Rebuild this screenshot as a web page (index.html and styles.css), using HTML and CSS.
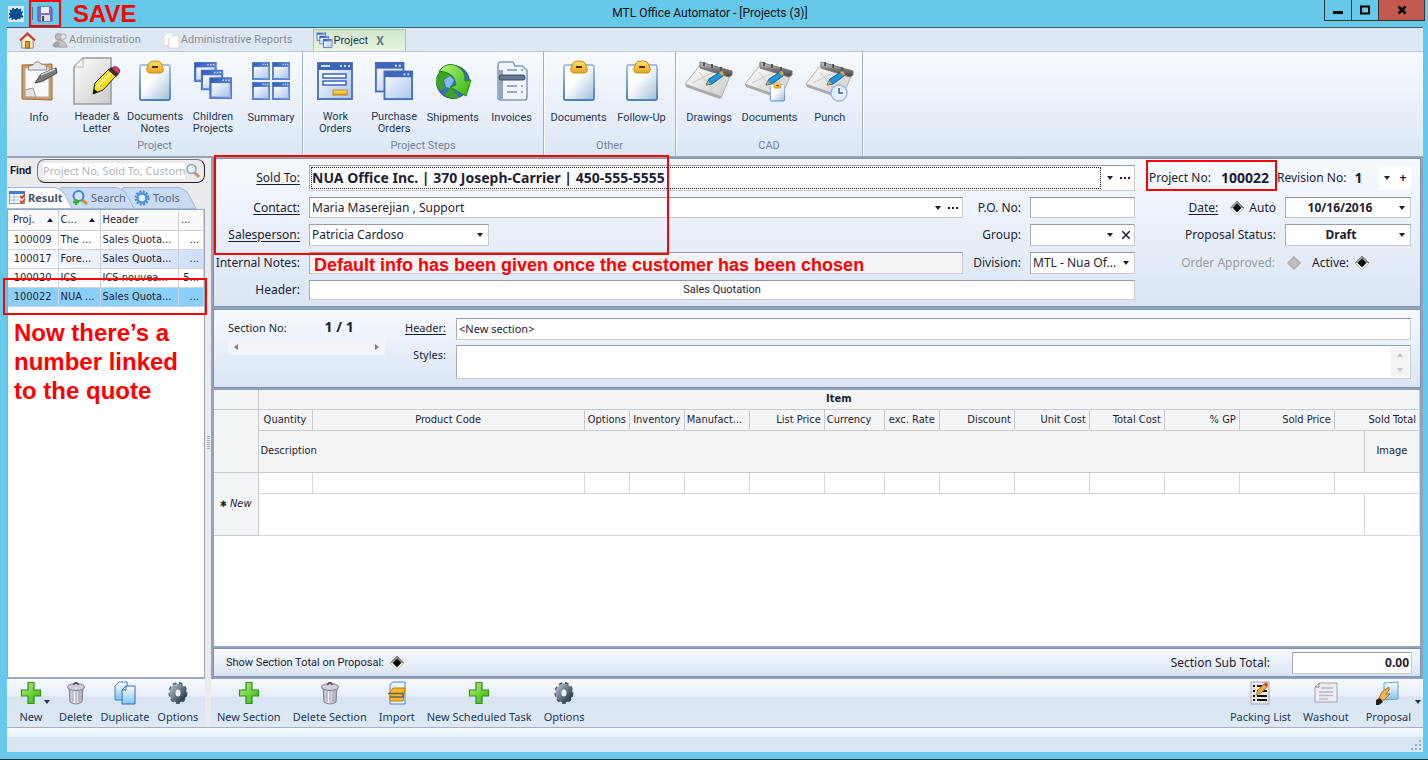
FILE: index.html
```html
<!DOCTYPE html>
<html lang="en">
<head>
<meta charset="utf-8">
<title>MTL Office Automator - [Projects (3)]</title>
<link rel="stylesheet" href="styles.css">
</head>
<body>
<svg class="sprite" width="0" height="0" aria-hidden="true">
  <defs>
    <linearGradient id="g-blue" x1="0" y1="0" x2="1" y2="1"><stop offset="0" stop-color="#2b56b5"/><stop offset="1" stop-color="#7fa6e6"/></linearGradient>
    <linearGradient id="g-pane" x1="0" y1="0" x2="1" y2="1"><stop offset="0" stop-color="#fff"/><stop offset="1" stop-color="#a9c4ef"/></linearGradient>
    <linearGradient id="g-page" x1="0" y1="0" x2="1" y2="1"><stop offset="0" stop-color="#fff"/><stop offset="1" stop-color="#c9c9c9"/></linearGradient>
    <linearGradient id="g-clip" x1="0" y1="0" x2="1" y2="1"><stop offset="0.4" stop-color="#fff"/><stop offset="1" stop-color="#9dbbd8"/></linearGradient>
    <linearGradient id="g-clipb" x1="0" y1="0" x2="0" y2="1"><stop offset="0" stop-color="#a9c0dc"/><stop offset="1" stop-color="#4a86b4"/></linearGradient>
    <linearGradient id="g-gold" x1="0" y1="0" x2="0" y2="1"><stop offset="0" stop-color="#ffe274"/><stop offset="1" stop-color="#e9a51d"/></linearGradient>
    <linearGradient id="g-green" x1="0" y1="0" x2="1" y2="1"><stop offset="0" stop-color="#b4f27c"/><stop offset="1" stop-color="#2fb50f"/></linearGradient>
    <linearGradient id="g-metal" x1="0" y1="0" x2="0" y2="1"><stop offset="0" stop-color="#d8d8d8"/><stop offset="0.5" stop-color="#777"/><stop offset="1" stop-color="#444"/></linearGradient>
    <linearGradient id="g-bin" x1="0" y1="0" x2="1" y2="0"><stop offset="0" stop-color="#a9a9b6"/><stop offset="0.4" stop-color="#f6f6fb"/><stop offset="1" stop-color="#a2a2b0"/></linearGradient>
    <linearGradient id="g-sky" x1="0" y1="0" x2="0" y2="1"><stop offset="0" stop-color="#fff"/><stop offset="1" stop-color="#7fc4ef"/></linearGradient>
    <linearGradient id="g-gear" x1="0" y1="0" x2="1" y2="1"><stop offset="0" stop-color="#a3b2c0"/><stop offset="1" stop-color="#2f3c49"/></linearGradient>
  </defs>
  <symbol id="win" viewBox="0 0 24 22" preserveAspectRatio="none">
    <rect x="0.5" y="0.5" width="23" height="21" fill="url(#g-blue)" stroke="#4d74c4"/>
    <rect x="2.500" y="6" width="19" height="13.500" fill="url(#g-pane)"/>
    <path d="M14 3h1.500M17 3h1.500M20 3h1.500" stroke="#cfe0ff" stroke-width="1.500"/>
  </symbol>
  <symbol id="clip" viewBox="0 0 36 42">
    <rect x="3" y="5" width="30" height="35" rx="2" fill="url(#g-clip)" stroke="url(#g-clipb)" stroke-width="2"/>
    <path d="M12 3Q13 1 18 1T24 3L26 8Q27 13 23 13H13Q9 13 10 8Z" fill="url(#g-gold)" stroke="#c98c18"/>
    <rect x="15" y="6" width="6" height="2" fill="#4c3000"/>
  </symbol>
  <symbol id="info" viewBox="0 0 40 42">
    <path d="M3 5L33 4 33 40 3 39Z" fill="#d49a5c" stroke="#9c6a35"/>
    <path d="M6 8L30 7 30 37 12 37 6 30Z" fill="#fafafa" stroke="#aaa"/>
    <path d="M6 30L14 28 17 37 6 37Z" fill="#e4e4e4" stroke="#999"/>
    <path d="M10 6L14 5Q18 -1 22 4L27 5 28 10H9Z" fill="#e7e7e7" stroke="#8b8b8b"/>
    <path d="M16 23L22 14 37 8 38 13 24 21Z" fill="#7a7a7a" stroke="#444"/>
    <path d="M22 15L36 9" stroke="#cfcfcf" stroke-width="1.500"/>
  </symbol>
  <symbol id="letter" viewBox="0 0 48 48">
    <path d="M10 1H38V47H1V10Z" fill="url(#g-page)" stroke="#9a9a9a" stroke-width="1.500"/>
    <path d="M10 1V10H1Z" fill="#fff" stroke="#aaa"/>
    <path d="M20 37L22 26 36 12 43 19 30 33Z" fill="#f6dc25" stroke="#222"/>
    <path d="M24 30L38 16" stroke="#fff799" stroke-width="2"/>
    <path d="M35 13L38 10 46 17 43 20Z" fill="#333"/>
    <path d="M39 11Q43 8 46 12 48 15 45 17Z" fill="#d83c5a" stroke="#8a2036"/>
    <path d="M20 37L21 32 25 35Z" fill="#111"/>
  </symbol>
  <symbol id="cascade" viewBox="0 0 42 40">
    <use href="#win" x="1" y="0" width="24" height="21"/>
    <use href="#win" x="8" y="8" width="24" height="22"/>
    <use href="#win" x="17" y="16" width="24" height="23"/>
  </symbol>
  <symbol id="tiles" viewBox="0 0 42 40">
    <use href="#win" x="1" y="0" width="19" height="19"/><use href="#win" x="22" y="0" width="19" height="19"/>
    <use href="#win" x="1" y="21" width="19" height="19"/><use href="#win" x="22" y="21" width="19" height="19"/>
  </symbol>
  <symbol id="orders" viewBox="0 0 40 42">
    <rect x="3" y="3" width="34" height="36" fill="url(#g-pane)" stroke="#5279bd" stroke-width="2"/>
    <rect x="3" y="3" width="34" height="7" fill="#3a66b4"/>
    <path d="M6 6h9M25 6h2M29 6h2M33 6h2" stroke="#cfe0ff" stroke-width="2"/>
    <path d="M8 14H31V18H8ZM8 21H31V25H8Z" fill="#fff" stroke="#3c64c4" stroke-width="1.500"/>
    <rect x="18" y="30" width="14" height="5" fill="url(#g-gold)" stroke="#b9861d"/>
  </symbol>
  <symbol id="two" viewBox="0 0 42 42">
    <rect x="2" y="2" width="29" height="30" fill="url(#g-pane)" stroke="#4a70b8" stroke-width="2"/><rect x="2" y="2" width="29" height="6" fill="#3f67b5"/>
    <rect x="11" y="11" width="29" height="29" fill="url(#g-pane)" stroke="#4a70b8" stroke-width="2"/><rect x="11" y="11" width="29" height="6" fill="#3f67b5"/>
    <path d="M22 5h2M26 5h2M31 14h2M35 14h2" stroke="#d6e4ff" stroke-width="2"/>
  </symbol>
  <symbol id="globe" viewBox="0 0 40 42">
    <circle cx="20" cy="22" r="16.500" fill="#356ec2" stroke="#28527c"/>
    <path d="M4 16Q8 7 16 6L17 16 10 20 12 28 7 31Q1 23 4 16ZM18 27L26 38Q18 40 11 35Z" fill="#3ca323"/>
    <path d="M11 20L17 16 21 20 17 28 13 27Z" fill="#8bb8f0"/>
    <path d="M6 11Q14 1 24 6 33 11 32 21L38 20 33 36 17 27 23 25Q22 12 6 11Z" fill="url(#g-green)" stroke="#278a12"/>
  </symbol>
  <symbol id="invoice" viewBox="0 0 34 42">
    <path d="M3 6Q3 2 6 2H18L20 6H27L32 10V38Q32 40 29 40H6Q3 40 3 37Z" fill="#f0f5fc" stroke="#7f99bb" stroke-width="1.500"/>
    <path d="M4 10H8V39H4Z" fill="#8fa5c4"/>
    <rect x="4" y="15" width="26" height="5" rx="2" fill="#66788f" stroke="#3f4d5f"/>
    <path d="M12 10h10M12 26h10M12 32h10M26 26h2M26 32h2M26 10h2" stroke="#7b8fab" stroke-width="1.500"/>
  </symbol>
  <symbol id="board" viewBox="0 0 50 42">
    <path d="M16 5L47 14 37 38 1 24Z" fill="url(#g-page)" stroke="#b5b5b5"/>
    <path d="M1 24L37 36 36 39 2 27Z" fill="#aaa"/>
    <path d="M8 23L30 12M15 12L28 28M26 31L40 18" stroke="#c9c9c9" fill="none"/>
    <path d="M16 2L48 11V15L45 17 16 8Z" fill="url(#g-metal)" stroke="#777"/>
    <path d="M20 2V6M28 4V8M37 7V11" stroke="#555" stroke-width="2"/>
    <path d="M22 25L25 19 36 12 39 16 28 24Z" fill="#2196d6" stroke="#135e91"/>
    <path d="M35 12L38 11 40 14 38 16Z" fill="#e4a345"/><path d="M22 25L24 21 27 24Z" fill="#d8a052"/>
  </symbol>
  <symbol id="board-doc" viewBox="0 0 50 42">
    <use href="#board" width="50" height="42"/><use href="#clip" x="25" y="22" width="17" height="20"/>
  </symbol>
  <symbol id="board-clock" viewBox="0 0 50 42">
    <use href="#board" width="50" height="42"/><circle cx="34" cy="33" r="8" fill="#e5efff" stroke="#9db6dd" stroke-width="1.500"/><path d="M34 28V33H38" fill="none" stroke="#3c5b8f" stroke-width="1.500"/>
  </symbol>
  <symbol id="plus" viewBox="0 0 24 24"><path d="M9 1.500H15V9H21.500V15H15V22.500H9V15H2.500V9H9Z" fill="url(#g-green)" stroke="#2f8f16" stroke-width="1.200"/></symbol>
  <symbol id="bin" viewBox="0 0 24 24"><path d="M5 7H19L18 21Q12 25 6 21Z" fill="url(#g-bin)" stroke="#85858f"/><path d="M9 10V21M12 10V22M15 10V21" stroke="#9c9cab"/><ellipse cx="12" cy="6" rx="8.500" ry="3.500" fill="#cfcfdb" stroke="#80808e"/><path d="M9.500 4Q12 -1 14.500 4" fill="none" stroke="#444" stroke-width="1.500"/></symbol>
  <symbol id="copy" viewBox="0 0 24 24"><path d="M2 5L6 1H14V19H2Z" fill="url(#g-sky)" stroke="#3e80bc"/><path d="M9 9L13 5H22V23H9Z" fill="url(#g-sky)" stroke="#2770b3"/><path d="M13 5V9H9" fill="none" stroke="#2770b3"/></symbol>
  <symbol id="gear" viewBox="0 0 24 24"><ellipse cx="12" cy="12" rx="8" ry="9.500" fill="none" stroke="#4a5967" stroke-width="3" stroke-dasharray="3.500 2.500"/><ellipse cx="12" cy="12" rx="5.500" ry="6.500" fill="none" stroke="url(#g-gear)" stroke-width="6"/></symbol>
  <symbol id="import" viewBox="0 0 24 24"><path d="M8 1H20V23H5V4Z" fill="#e6f3fd" stroke="#4889c1"/><path d="M5 11L8 7H20L18 20H5Z" fill="#f7b729" stroke="#c07c0a"/><path d="M3 12.500H18V16H5" fill="none" stroke="#666" stroke-width="1.500"/></symbol>
  <symbol id="packing" viewBox="0 0 24 24"><path d="M3 1H21V23H3Z" fill="#e8e8e8" stroke="#aaa"/><path d="M5 5h2M5 10h2M5 15h2M5 19h2M9 5h10M9 10h10M9 15h10M9 19h10" stroke="#111" stroke-width="2"/><path d="M8 14L10 9 16 3 19 6 13 12Z" fill="#f2a93c" stroke="#a96312" stroke-width=".7"/><path d="M16 3L18 1 20 4 19 6Z" fill="#d33"/></symbol>
  <symbol id="washout" viewBox="0 0 24 24"><path d="M5 2H23V21H1V6Z" fill="#ececf2" stroke="#a4a4b0"/><path d="M5 2V6H1" fill="none" stroke="#888"/><path d="M7 7h12M5 11h14M5 14.500h14M5 18h9" stroke="#b9b9c9" stroke-width="1.500"/></symbol>
  <symbol id="proposal" viewBox="0 0 24 24"><path d="M8 2L22 1V18L8 19Z" fill="url(#g-sky)" stroke="#5da5c9"/><path d="M2 19L6 11 13 6 13 9 10 13H14L8 19Z" fill="#f7b35a" stroke="#b36d1b"/><path d="M0 19L4 17 7 21 3 24H0Z" fill="#222"/></symbol>
  <symbol id="home" viewBox="0 0 18 18"><path d="M3 8V17H15V8L9 3Z" fill="#f8f0d6" stroke="#9a7d4c"/><path d="M1 9L9 1.500 17 9" fill="none" stroke="#d33a2c" stroke-width="2.200"/><rect x="7" y="10" width="4" height="7" fill="#e69a1c" stroke="#93600f"/></symbol>
  <symbol id="people" viewBox="0 0 18 18"><circle cx="8" cy="5" r="3.500" fill="#bbb" stroke="#9b9b9b"/><circle cx="13" cy="5" r="3" fill="#e4e4e4" stroke="#aaa"/><path d="M4 16Q5 8 9 9 15 8 17 16Z" fill="#c4c4c4" stroke="#a0a0a0"/><path d="M1 14L5 10 9 11 9 16H3Z" fill="#a5a5a5"/></symbol>
  <symbol id="pages" viewBox="0 0 18 18"><path d="M1 5L4 1H11V14H1Z" fill="#fdfdfd" stroke="#ddd"/><path d="M6 7L9 4H17V17H6Z" fill="#fff" stroke="#d5d5d5"/></symbol>
  <symbol id="app" viewBox="0 0 16 16"><rect width="16" height="16" fill="#d5ecf8"/><path d="M2 4L4 5 5 2 7 4 9 2 10 4 13 3 12 6 15 6 13 8 15 11 12 11 12 13 10 12 8 14 6 12 4 14 4 11 1 12 3 9 1 8 3 7Z" fill="#0d4c92" stroke="#0d4c92" stroke-linejoin="round"/></symbol>
  <symbol id="disk" viewBox="0 0 16 16"><path d="M1 1H14L15 3V15H1Z" fill="#7d72c4" stroke="#5a5099"/><rect x="4" y="1" width="8" height="6" fill="#eef"/><rect x="4" y="9" width="9" height="6" fill="#ddd"/><rect x="5" y="10" width="2" height="5" fill="#444"/></symbol>
  <symbol id="lens" viewBox="0 0 16 16"><path d="M9 9L14 14" stroke="#c99261" stroke-width="3"/><circle cx="6.500" cy="6" r="4.500" fill="#e4effa" stroke="#8fa2b8" stroke-width="1.500"/></symbol>
  <symbol id="lens-plus" viewBox="0 0 16 16"><path d="M9 9L15 14" stroke="#d98a2c" stroke-width="3"/><circle cx="6.500" cy="6" r="5" fill="#cfe5fb" stroke="#4784cf" stroke-width="2"/><path d="M4 9V15M1 12H7" stroke="#35b31c" stroke-width="2.500"/></symbol>
  <symbol id="result" viewBox="0 0 16 16"><rect x="0.500" y="1.500" width="15" height="12" fill="#fff" stroke="#7da0cf"/><rect y="1" width="16" height="3" fill="#3f7ccc"/><path d="M1 7h9M1 10h9M5 4v9" stroke="#9db9dd"/><path d="M11 6L13 8 16 4M11 11L13 13 16 9" fill="none" stroke="#e23d1c" stroke-width="2"/></symbol>
  <symbol id="tools" viewBox="0 0 16 16"><circle cx="8" cy="8" r="6.500" fill="none" stroke="#3f87d0" stroke-width="2" stroke-dasharray="2 1.400"/><circle cx="8" cy="8" r="4.500" fill="#eaf4ff" stroke="#4a93dc" stroke-width="2.500"/></symbol>
  <symbol id="down" viewBox="0 0 8 8"><path d="M1 2H7L4 6Z" fill="currentColor"/></symbol>
  <symbol id="up" viewBox="0 0 8 8"><path d="M1 6H7L4 2Z" fill="currentColor"/></symbol>
  <symbol id="left" viewBox="0 0 8 8"><path d="M6 1V7L2 4Z" fill="currentColor"/></symbol>
  <symbol id="right" viewBox="0 0 8 8"><path d="M2 1V7L6 4Z" fill="currentColor"/></symbol>
  <symbol id="dots" viewBox="0 0 12 8"><path d="M0 3h2v2h-2zM4 3h2v2h-2zM8 3h2v2h-2z" fill="currentColor"/></symbol>
  <symbol id="cross" viewBox="0 0 8 8"><path d="M0 0L8 8M8 0L0 8" stroke="currentColor" stroke-width="1.500"/></symbol>
</svg>

<header class="titlebar">
  <svg class="i16"><use href="#app"/></svg>
  <span class="title-sep"></span>
  <button class="save" aria-label="Save"><svg class="i16"><use href="#disk"/></svg></button>
  <strong class="note note-save">SAVE</strong>
  <h1 class="title">MTL Office Automator - [Projects (3)]</h1>
  <div class="winbtns">
    <button aria-label="Minimize"><svg width="12" height="12"><rect x="1" y="7" width="10" height="3"/></svg></button>
    <button aria-label="Maximize"><svg width="12" height="12"><path d="M2 2.500H10V9.500H2Z" fill="none" stroke="#000" stroke-width="2"/></svg></button>
    <button class="close" aria-label="Close"><svg width="12" height="12"><path d="M2.500 2.500L9.500 9.500M9.500 2.500L2.500 9.500" stroke="#000" stroke-width="2.500"/></svg></button>
  </div>
</header>

<main class="window">
  <nav class="doctabs">
    <a href="#" class="home" aria-label="Home"><svg class="i18"><use href="#home"/></svg></a>
    <a href="#" class="tab-admin"><svg class="i18"><use href="#people"/></svg>Administration</a>
    <a href="#" class="tab-reports"><svg class="i18"><use href="#pages"/></svg>Administrative Reports</a>
    <a href="#" class="active"><svg class="i18"><use href="#cascade"/></svg>Project <b>X</b></a>
  </nav>

  <div class="ribbon">
    <section class="rgroup g-project"><div class="rbtns">
      <button><svg><use href="#info"/></svg><span>Info</span></button>
      <button class="two big"><svg><use href="#letter"/></svg><span>Header &amp; Letter</span></button>
      <button class="two"><svg><use href="#clip"/></svg><span>Documents Notes</span></button>
      <button class="two"><svg><use href="#cascade"/></svg><span>Children Projects</span></button>
      <button><svg><use href="#tiles"/></svg><span>Summary</span></button>
    </div><h2>Project</h2></section>
    <section class="rgroup g-steps"><div class="rbtns">
      <button class="two"><svg><use href="#orders"/></svg><span>Work<br>Orders</span></button>
      <button class="two"><svg><use href="#two"/></svg><span>Purchase Orders</span></button>
      <button><svg><use href="#globe"/></svg><span>Shipments</span></button>
      <button><svg><use href="#invoice"/></svg><span>Invoices</span></button>
    </div><h2>Project Steps</h2></section>
    <section class="rgroup g-other"><div class="rbtns">
      <button><svg><use href="#clip"/></svg><span>Documents</span></button>
      <button><svg><use href="#clip"/></svg><span>Follow-Up</span></button>
    </div><h2>Other</h2></section>
    <section class="rgroup g-cad"><div class="rbtns">
      <button class="wide"><svg><use href="#board"/></svg><span>Drawings</span></button>
      <button class="wide"><svg><use href="#board-doc"/></svg><span>Documents</span></button>
      <button class="wide"><svg><use href="#board-clock"/></svg><span>Punch</span></button>
    </div><h2>CAD</h2></section>
  </div>

  <div class="workspace">
    <aside class="side">
      <div class="find">
        <label for="find">Find</label>
        <div class="findbox"><input id="find" type="text" placeholder="Project No, Sold To, Customer"><svg class="i16"><use href="#lens"/></svg></div>
      </div>
      <div class="sidetabs">
        <button class="on"><svg class="i16"><use href="#result"/></svg>Result</button>
        <button class="mid"><svg class="i16"><use href="#lens-plus"/></svg>Search</button>
        <button><svg class="i16"><use href="#tools"/></svg>Tools</button>
      </div>
      <div class="results">
        <table>
          <colgroup><col class="c-no"><col class="c-cust"><col><col class="c-more"></colgroup>
          <thead><tr><th><span>Proj.</span><svg class="i8"><use href="#up"/></svg></th><th><span>C...</span><svg class="i8"><use href="#up"/></svg></th><th>Header</th><th>...</th></tr></thead>
          <tbody>
            <tr><td>100009</td><td>The ...</td><td>Sales Quota...</td><td>...</td></tr>
            <tr class="alt"><td>100017</td><td>Fore...</td><td>Sales Quota...</td><td>...</td></tr>
            <tr><td>100020</td><td>ICS</td><td>ICS nouvea...</td><td>5...</td></tr>
            <tr class="sel"><td>100022</td><td>NUA ...</td><td>Sales Quota...</td><td>...</td></tr>
          </tbody>
        </table>
        <div class="redbox box-row"></div>
        <strong class="note note-number">Now there’s a number linked to the quote</strong>
      </div>
      <div class="toolbar">
        <button class="drop"><svg><use href="#plus"/></svg>New<svg class="i8 caret"><use href="#down"/></svg></button>
        <button><svg><use href="#bin"/></svg>Delete</button>
        <button><svg><use href="#copy"/></svg>Duplicate</button>
        <button><svg><use href="#gear"/></svg>Options</button>
      </div>
    </aside>

    <div class="splitter"><i></i></div>

    <section class="content">
      <div class="panes">
        <form class="panel details">
          <div class="redbox box-form"></div>
          <label for="sold" class="u">Sold To:</label>
          <div class="field span3 sold"><input id="sold" value="NUA Office Inc. | 370 Joseph-Carrier | 450-555-5555"><button type="button" aria-label="Open list"><svg class="i8"><use href="#down"/></svg></button><button type="button" aria-label="Browse"><svg class="i12"><use href="#dots"/></svg></button></div>
          <div class="numbers">
            <div class="redbox box-number"></div>
            <label for="pno">Project No:</label><output id="pno">100022</output>
            <label for="rev">Revision No:</label><output id="rev">1</output>
            <div class="revbtns"><button type="button" aria-label="Revisions"><svg class="i8"><use href="#down"/></svg></button><button type="button" aria-label="Add revision">+</button></div>
          </div>

          <label for="contact" class="u">Contact:</label>
          <div class="field"><input id="contact" value="Maria Maserejian , Support"><button type="button" aria-label="Open list"><svg class="i8"><use href="#down"/></svg></button><button type="button" aria-label="Browse"><svg class="i12"><use href="#dots"/></svg></button></div>
          <label for="po">P.O. No:</label>
          <div class="field"><input id="po"></div>
          <div class="checks"><label for="date" class="u">Date:</label><input type="checkbox" id="auto" checked><label for="auto">Auto</label></div>
          <div class="field strong"><input id="date" value="10/16/2016"><button type="button" aria-label="Open calendar"><svg class="i8"><use href="#down"/></svg></button></div>

          <label for="sales" class="u">Salesperson:</label>
          <div class="field salesperson"><select id="sales"><option>Patricia Cardoso</option></select><svg class="i8 pick"><use href="#down"/></svg></div>
          <label for="group">Group:</label>
          <div class="field"><select id="group"><option></option></select><svg class="i8 pick"><use href="#down"/></svg><button type="button" aria-label="Clear"><svg class="i8"><use href="#cross"/></svg></button></div>
          <label for="status">Proposal Status:</label>
          <div class="field strong"><select id="status"><option>Draft</option></select><svg class="i8 pick"><use href="#down"/></svg></div>

          <label for="notes">Internal Notes:</label>
          <div class="field readonly"><input id="notes" readonly><strong class="note note-default">Default info has been given once the customer has been chosen</strong></div>
          <label for="division">Division:</label>
          <div class="field"><select id="division"><option>MTL - Nua Of...</option></select><svg class="i8 pick"><use href="#down"/></svg></div>
          <div class="checks approvals"><label for="approved" class="off">Order Approved:</label><input type="checkbox" id="approved" disabled><label for="active">Active:</label><input type="checkbox" id="active" checked></div>

          <label for="header">Header:</label>
          <div class="field span3 center"><input id="header" value="Sales Quotation"></div>
        </form>

        <form class="panel section">
          <div class="secno">
            <div class="secline"><span>Section No:</span><b>1 / 1</b></div>
            <div class="hscroll"><button type="button" aria-label="Previous section"><svg class="i8"><use href="#left"/></svg></button><button type="button" aria-label="Next section"><svg class="i8"><use href="#right"/></svg></button></div>
          </div>
          <div class="secfields">
            <label for="sech" class="u">Header:</label>
            <div class="field"><input id="sech" value="&lt;New section&gt;"></div>
            <label for="styles">Styles:</label>
            <div class="field"><textarea id="styles"></textarea><div class="vscroll"><svg class="i8"><use href="#up"/></svg><svg class="i8"><use href="#down"/></svg></div></div>
          </div>
        </form>

        <div class="items">
          <table>
            <colgroup><col class="w44"><col class="w54"><col><col class="w45"><col class="w55"><col class="w65"><col class="w75"><col class="w60"><col class="w55"><col class="w75"><col class="w75"><col class="w75"><col class="w75"><col class="w95"><col class="w30"><col class="w55"></colgroup>
            <thead>
              <tr class="band"><th></th><th colspan="15">Item</th></tr>
              <tr class="cols"><th rowspan="2"></th><th>Quantity</th><th>Product Code</th><th>Options</th><th>Inventory</th><th class="l">Manufact...</th><th class="r">List Price</th><th class="l">Currency</th><th>exc. Rate</th><th class="r">Discount</th><th class="r">Unit Cost</th><th class="r">Total Cost</th><th class="r">% GP</th><th class="r">Sold Price</th><th class="r" colspan="2">Sold Total</th></tr>
              <tr class="desc"><th class="l" colspan="14">Description</th><th>Image</th></tr>
            </thead>
            <tbody>
              <tr class="new1"><th rowspan="2"><span class="star">✱</span> <em>New</em></th><td></td><td></td><td></td><td></td><td></td><td></td><td></td><td></td><td></td><td></td><td></td><td></td><td></td><td colspan="2"></td></tr>
              <tr class="new2"><td colspan="14"></td><td></td></tr>
            </tbody>
          </table>
        </div>

        <div class="panel totals">
          <label for="show" class="show">Show Section Total on Proposal:</label><input type="checkbox" id="show" checked>
          <label for="sub" class="sub">Section Sub Total:</label>
          <div class="field"><input id="sub" value="0.00"></div>
        </div>
      </div>
      <div class="toolbar">
        <button><svg><use href="#plus"/></svg>New Section</button>
        <button><svg><use href="#bin"/></svg>Delete Section</button>
        <button><svg><use href="#import"/></svg>Import</button>
        <button><svg><use href="#plus"/></svg>New Scheduled Task</button>
        <button><svg><use href="#gear"/></svg>Options</button>
        <span class="spacer"></span>
        <button><svg><use href="#packing"/></svg>Packing List</button>
        <button><svg><use href="#washout"/></svg>Washout</button>
        <button class="drop"><svg><use href="#proposal"/></svg>Proposal<svg class="i8 caret"><use href="#down"/></svg></button>
      </div>
    </section>
  </div>
  <footer class="status-bar"><svg width="12" height="12"><path d="M8 0h2v2h-2zM8 4h2v2h-2zM8 8h2v2h-2zM4 4h2v2h-2zM4 8h2v2h-2zM0 8h2v2h-2z" fill="#9aa9c2"/></svg></footer>
</main>
</body>
</html>
```
FILE: styles.css
```css
* { box-sizing: border-box; }
body {
  margin: 0;
  min-height: 100vh;
  display: flex;
  flex-direction: column;
  background: #66c9ea;
  border-bottom: 1px solid #22333c;
  font: 12px/16px "Noto Sans", "Open Sans", sans-serif;
  color: #1e1e32;
}
button, input, select, textarea { font: inherit; color: inherit; margin: 0; padding: 0; border: 0; background: none; min-width: 0; }
button { cursor: pointer; }
a { color: inherit; text-decoration: none; }
h1, h2 { margin: 0; font-weight: 400; }
svg { flex: none; display: block; }
.sprite { position: absolute; }
.i8 { width: 8px; height: 8px; }
.i12 { width: 12px; height: 8px; }
.i16 { width: 16px; height: 16px; }
.i18 { width: 17px; height: 17px; }

/* Callouts drawn over the window */
.note { color: #f00; font-family: "Liberation Sans", Arial, sans-serif; font-weight: 700; }
.redbox { position: absolute; border: 2px solid #f00; pointer-events: none; z-index: 2; }

/* Title bar */
.titlebar { position: relative; height: 27px; display: flex; align-items: center; padding-left: 8px; }
.title-sep { width: 1px; height: 13px; margin-left: 8px; background: #3d7c94; }
.save { width: 32px; height: 27px; margin-left: -4px; display: grid; place-items: center; border: 2px solid #f00; }
.note-save { margin-left: 12px; font-size: 24px; line-height: 27px; }
.title { position: absolute; left: 0; right: 8px; top: 5px; text-align: center; font: 12px/16px Roboto, sans-serif; color: #111; pointer-events: none; }
.winbtns { display: flex; align-self: flex-start; margin-left: auto; margin-right: 3px; border: 1px solid #333; border-top: 0; }
.winbtns button { width: 27px; height: 20px; display: grid; place-items: center; border-right: 1px solid #333; }
.winbtns .close { width: 45px; background: #c25a52; border: 0; }

.window { flex: 1; display: flex; flex-direction: column; margin: 0 5px 7px 7px; border-top: 1px solid #46606f; background: #dde8f5; }

/* Document tabs */
.doctabs { height: 24px; display: flex; align-items: flex-end; background: #dee8f4; border-bottom: 1px solid #b7c6da; font: 11px/16px Roboto, sans-serif; color: #8b8e94; }
.doctabs a { height: 22px; display: flex; align-items: center; gap: 1px; }
.doctabs .home { margin-left: 12px; }
.doctabs .tab-admin { margin-left: 15px; }
.doctabs .tab-reports { margin-left: 22px; }
.doctabs .active { margin-left: 20px; width: 93px; padding-left: 2px; background: linear-gradient(#cfe6c8, #eaf5e0); border: 1px solid #a9c8a4; border-bottom: 0; color: #1e395b; }
.doctabs b { margin-left: 7px; font-size: 12px; color: #6c7482; }

/* Ribbon */
.ribbon { display: flex; height: 104px; background: linear-gradient(#f7fafe, #dce7f5); font: 11px/12px Roboto, sans-serif; color: #1e395b; }
.rgroup { display: flex; flex-direction: column; padding: 0 2px; border-right: 1px solid #9db2cd; box-shadow: 1px 0 #fff; }
.g-project { width: 296px; }
.g-steps { width: 241px; }
.g-other { width: 132px; }
.g-cad { width: 187px; }
.rbtns { flex: 1; display: flex; padding-left: 1px; }
.rbtns button { flex: 1 1 0; display: flex; flex-direction: column; align-items: center; padding-top: 8px; white-space: nowrap; }
.rbtns svg { width: 40px; height: 42px; margin-bottom: 10px; }
.rbtns .two span { width: 57px; white-space: normal; }
.rbtns .two svg { margin-bottom: 9px; }
.rbtns .big svg { width: 48px; height: 48px; margin: -3px 0 6px; }
.rbtns .wide svg { width: 50px; }
.rgroup h2 { font: 11px/16px Roboto, sans-serif; color: #73859f; text-align: center; padding-bottom: 2px; }

.workspace { flex: 1; display: grid; grid-template-columns: 198px 6px minmax(0, 1fr); border-top: 2px solid #98a3b5; }

/* Left side */
.side, .content { display: flex; flex-direction: column; min-width: 0; }
.side { background: #ebebee; font: 11px/16px "DejaVu Sans Condensed", "DejaVu Sans", sans-serif; }
.find { display: flex; align-items: center; height: 25px; padding-left: 3px; }
.find label { flex: none; width: 27px; font: 700 11px/16px Roboto, sans-serif; }
.findbox { flex: 1; min-width: 0; display: flex; align-items: center; height: 24px; padding: 0 3px 0 5px; border: 1px solid #777; border-right-color: #222; border-bottom-color: #222; border-radius: 8px; }
.findbox input { flex: 1; width: 0; background: #fff; outline: 0; height: 16px; font: 11px/16px "Noto Sans", sans-serif; }
.findbox input::placeholder { color: #b4b4b8; opacity: 1; }
.sidetabs { position: relative; z-index: 0; display: flex; height: 26px; align-items: flex-end; overflow: hidden; font-family: "Noto Sans", sans-serif; color: #56657d; }
.sidetabs button { position: relative; z-index: 1; width: 62px; display: flex; align-items: center; gap: 3px; height: 22px; padding: 0 2px; }
.sidetabs button::before {
  content: "";
  position: absolute;
  inset: 0 3px 0 -6px;
  z-index: -1;
  background: #c8dbf2;
  border: 1px solid #9db8dc;
  border-radius: 4px 8px 0 0;
  transform: skewX(28deg);
}
.sidetabs .mid { z-index: 2; }
.sidetabs .on { z-index: 3; width: 63px; font-weight: 700; color: #44536a; }
.sidetabs .on::before { left: -16px; background: #fff; }
.results { position: relative; flex: 1; background: #fff; border: 1px solid #9aa5b8; border-bottom: 2px solid #9aa9c2; }
.results table { width: 100%; border-collapse: collapse; table-layout: fixed; }
.c-no { width: 50px; } .c-cust { width: 42px; } .c-more { width: 25px; }
.results th, .results td { height: 19px; padding: 0 2px; border-right: 1px solid #d0d2da; border-bottom: 1px solid #d0d2da; font-weight: 400; text-align: left; white-space: nowrap; overflow: hidden; line-height: 16px; }
.results th { height: 20px; background: #fafafb; }
.results th:first-child { padding-left: 5px; }
.results th span { display: inline-block; }
.results th svg { float: right; margin: 4px 2px 0 0; }
.results td:first-child { text-align: right; padding-right: 6px; }
.results td:last-child { text-align: right; padding-right: 4px; }
.alt { background: linear-gradient(90deg, #fff, #cfdffa); }
.sel { background: #8bcffb; }
.box-row { left: -5px; top: 68px; width: 204px; height: 37px; }
.note-number { display: block; padding: 11px 6px; font-size: 24px; line-height: 29px; }

.splitter { background: #ebebee; display: grid; place-items: center; }
.splitter i { width: 3px; height: 14px; background: repeating-linear-gradient(#a8acb8 0 1px, #ebebee 1px 2px); }

/* Panes */
.panes { flex: 1; display: flex; flex-direction: column; gap: 2px; padding: 0 2px 2px; background: #93a3bf; }
.panel { position: relative; border: 1px solid #7f91ad; background: linear-gradient(#f6fafe, #dae5f4); }
label { white-space: nowrap; }
.u { text-decoration: underline; text-underline-offset: 2px; }

.field { position: relative; display: flex; align-items: stretch; min-width: 0; background: #fff; border: 1px solid #c9cbd2; border-top-color: #989aaa; border-left-color: #a9abb8; }
.field > input, .field > select, .field > textarea { flex: 1; width: 100%; padding: 0 2px; appearance: none; outline: 0; resize: none; }
.field > button { width: 16px; display: grid; place-items: center; }
.pick { position: absolute; right: 4px; top: 6px; pointer-events: none; }
.pick:has(+ button) { right: 20px; }
.strong > * { font-weight: 700; text-align: center; }
.strong > select { text-align-last: center; padding-right: 16px; }
.center > input { text-align: center; font: 11px/16px Roboto, sans-serif; }
.readonly { background: #f4f4f6; }

.details {
  display: grid;
  grid-template-columns: 89px minmax(0, 1fr) 55px 105px 138px 126px;
  grid-template-rows: 26px 21px 22px 22px 20px;
  gap: 6px;
  padding: 6px 9px 6px 0;
  align-items: stretch;
}
.details > label { text-align: right; align-self: center; padding-right: 3px; }
.span3 { grid-column: span 3; }
.sold > input { font-size: 14px; font-weight: 700; outline: 1px dotted #222; outline-offset: -2px; }
.salesperson { width: 180px; }
.numbers { position: relative; grid-column: span 2; display: flex; align-items: center; padding-left: 8px; }
.numbers output { font-size: 14px; font-weight: 700; margin-left: 10px; }
.numbers #pno { margin-right: 8px; }
.numbers #rev { margin-left: 8px; }
.revbtns { display: flex; margin-left: auto; background: #fff; }
.revbtns button { width: 16px; height: 24px; display: grid; place-items: center; font-weight: 700; }
.box-form { left: 0; top: -4px; width: 455px; height: 100px; }
.box-number { left: 5px; top: -5px; width: 131px; height: 31px; }
.checks { display: flex; align-items: center; justify-content: flex-end; gap: 6px; padding-right: 3px; }
.checks .u { margin-right: 6px; }
.approvals { grid-column: span 2; padding-right: 43px; }
.approvals .off { color: #9a9ea8; margin-right: 6px; }
.approvals #approved { margin-right: 6px; }
.note-default { position: absolute; left: 4px; top: 2px; font-size: 18px; line-height: 21px; white-space: nowrap; }

input[type="checkbox"] { appearance: none; flex: none; width: 13px; height: 13px; display: grid; place-items: center; }
input[type="checkbox"]::before { content: ""; box-sizing: border-box; width: 10px; height: 10px; transform: rotate(45deg); background: #000; border: 2px solid #f4f1ea; border-top-color: #888; border-left-color: #999; }
input[type="checkbox"]:disabled::before { background: #bfbfbf; border-color: #b5b5b5; }

.section { display: flex; padding: 8px 9px 8px 14px; font-size: 11px; }
.secno { width: 157px; }
.secline { display: flex; gap: 38px; line-height: 20px; height: 20px; }
.secline b { font-size: 14px; line-height: 18px; }
.hscroll { display: flex; justify-content: space-between; height: 16px; padding: 0 4px; margin-top: 1px; background: #f3f4f7; color: #7c7f88; align-items: center; }
.secfields { flex: 1; display: grid; grid-template-columns: 65px minmax(0, 1fr); grid-template-rows: 22px 34px; gap: 5px 6px; }
.secfields label { text-align: right; padding: 2px 4px 0 0; }
.vscroll { width: 18px; margin: 1px; display: flex; flex-direction: column; align-items: center; justify-content: space-around; background: #f4f4f6; color: #c3c5cc; }

/* Items grid */
.items { flex: 1; background: #fff; border: solid #93a3bf; border-width: 0 1px; font: 11px/16px "DejaVu Sans Condensed", "DejaVu Sans", sans-serif; }
.items table { width: 100%; border-collapse: collapse; table-layout: fixed; }
.w30 { width: 30px; } .w44 { width: 44px; } .w45 { width: 45px; } .w54 { width: 54px; } .w55 { width: 55px; } .w60 { width: 60px; }
.w65 { width: 65px; } .w75 { width: 75px; } .w95 { width: 95px; }
.items th, .items td { padding: 0 2px; border: 1px solid #c8cad2; border-left: 0; border-top: 0; font-weight: 400; text-align: center; white-space: nowrap; overflow: hidden; }
.items td { border-color: #d5d6de; }
.items th { background: #f4f5f6; }
.items .band th { height: 19px; font-weight: 700; }
.items .cols th, .new1 td { height: 21px; }
.items .desc th, .new2 td { height: 42px; }
.items .l { text-align: left; }
.items .r { text-align: right; padding-right: 3px; }
.star { font-size: 9px; }

.totals { display: flex; align-items: center; gap: 7px; height: 29px; padding: 0 8px 0 12px; }
.totals .show { font: 11px/16px Roboto, sans-serif; }
.totals .sub { margin-left: auto; margin-right: 15px; }
.totals .field { width: 120px; height: 22px; }
.totals .field input { text-align: right; font-weight: 700; }

/* Bottom bars */
.toolbar { display: flex; height: 48px; background: linear-gradient(#f8fbfe, #e6eef8 36%, #d8e4f2 37%, #dfe9f5); color: #1e395b; font: 11px/16px "Noto Sans", "Open Sans", sans-serif; }
.side .toolbar { padding-left: 4px; }
.toolbar button { position: relative; display: flex; flex-direction: column; align-items: center; gap: 4px; padding: 2px 6px; white-space: nowrap; }
.side .toolbar button { padding: 2px 4px; }
.toolbar button > svg:first-child { width: 24px; height: 24px; }
.side .toolbar .drop { padding: 2px 12px 2px 8px; }
.content .toolbar .drop { padding: 2px 12px 2px 11px; }
.toolbar .caret { position: absolute; right: 4px; top: 19px; }
.content .toolbar .caret { right: 1px; }
.spacer { flex: 1; }
.status-bar { display: flex; align-items: flex-end; justify-content: flex-end; height: 25px; border-top: 1px solid #9fb0cb; background: linear-gradient(#f8fbfe, #eaf1f9 36%, #d9e4f2 37%, #dce7f4); }
```
